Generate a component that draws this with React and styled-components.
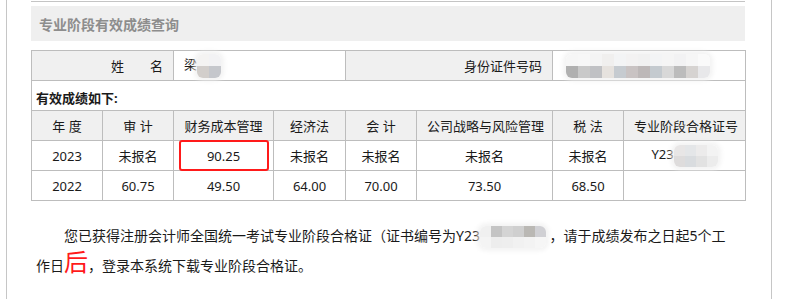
import React from 'react';
import styled, { createGlobalStyle } from 'styled-components';

const GlobalStyle = createGlobalStyle`
  body {
    margin: 0;
    background: #fff;
    font-family: "Noto Sans", "Noto Sans CJK SC", sans-serif;
    color: #1a1a1a;
  }
`;

const Frame = styled.div`
  box-sizing: border-box;
  margin-left: 6px;
  width: 766px;
  min-height: 299px;
  border-left: 1px solid #c6c6c6;
  border-right: 1px solid #c6c6c6;
  padding: 1px 26px 0 24px;
`;

const Inner = styled.div`
  border-top: 1px solid #c4c4c4;
`;

const Heading = styled.div`
  margin-top: 4px;
  height: 35px;
  background: #efefef;
  display: flex;
  align-items: center;
  padding-left: 8px;
  font-size: 14px;
  font-weight: bold;
  color: #8d8d8d;
`;

const Table = styled.table`
  margin-top: 9px;
  width: 714px;
  border-collapse: collapse;
  table-layout: fixed;
  font-size: 13px;
`;

const Row = styled.tr`
  height: 30px;
`;

const Cell = styled.td`
  border: 1px solid #bdbdbd;
  padding: 0 ${(p) => (p.$align === 'center' ? '0' : '10px')};
  text-align: ${(p) => p.$align || 'center'};
  background: ${(p) => (p.$shade ? '#f0f0f0' : '#fff')};
  line-height: 18px;
  white-space: nowrap;
  position: relative;
`;

const NoteCell = styled.td`
  border: 1px solid #bdbdbd;
  padding: 4px 0 0 4px;
  font-weight: bold;
  font-size: 13px;
`;

const Highlight = styled.div`
  position: absolute;
  left: 5px;
  right: 4px;
  top: -1px;
  bottom: -1px;
  border: 2px solid #ff1a1a;
  border-radius: 3px;
  pointer-events: none;
`;

const Mask = styled.span`
  display: inline-grid;
  grid-template-columns: repeat(${(p) => p.$cols}, ${(p) => p.$size}px);
  grid-auto-rows: ${(p) => p.$size}px;
  vertical-align: middle;
  margin-left: ${(p) => p.$gap || 0}px;
  border-radius: 6px;
  overflow: hidden;
  box-shadow: 0 0 4px 3px rgba(240, 240, 240, 0.8);
`;

const Tile = styled.span`
  background: ${(p) => p.$c};
`;

const Paragraph = styled.p`
  margin: 21px 0 0;
  padding: 0 8px 0 5px;
  font-size: 14px;
  line-height: 28px;
  text-indent: 2em;
`;

const Big = styled.span`
  color: #ff1a1a;
  font-size: 24px;
  line-height: 1;
`;

function Blur({ cols, size, gap, colors }) {
  return (
    <Mask $cols={cols} $size={size} $gap={gap}>
      {colors.map((c, i) => (
        <Tile key={i} $c={c} />
      ))}
    </Mask>
  );
}

const nameTiles = ['#f4f3f2', '#f2f2f4', '#d2cecb', '#c5c7cc'];
const idTiles = [
  '#f6f6f6', '#f7f7f7', '#f4f4f4', '#f0efee', '#f3f4f5', '#f3f2f2', '#f1f1f1', '#f3f4f5', '#f5f5f5', '#f2f2f3', '#f6f6f6', '#fafafa',
  '#b0b0b0', '#c9c9c9', '#c0c1c4', '#e6e2de', '#c6cbd0', '#c9c3c3', '#bdb8b8', '#c4cacf', '#d8d8d8', '#bcbcbc', '#d6d3d1', '#e8e8ea',
];
const certTiles = ['#e8e6e6', '#e4e6e8', '#ecebeb', '#f3f3f3', '#dedcdc', '#d9dcdf', '#e2e2e2', '#ececec'];
const paraTiles = [
  '#f0f0f0', '#c4c4c4', '#d4d4d4', '#cfcfcf', '#bab8b4', '#d0d0d4',
  '#f4f4f4', '#ededed', '#eeeeee', '#f1f1f1', '#f3f3f3', '#f6f6f6',
];

const subjects = ['年 度', '审 计', '财务成本管理', '经济法', '会 计', '公司战略与风险管理', '税 法', '专业阶段合格证号'];
const widths = [71, 71, 100, 72, 71, 136, 71, 122];

export default function App() {
  return (
    <>
      <GlobalStyle />
      <Frame>
        <Inner>
          <Heading>专业阶段有效成绩查询</Heading>
          <Table>
            <colgroup>
              {widths.map((w, i) => (
                <col key={i} style={{ width: w }} />
              ))}
            </colgroup>
            <tbody>
              <Row>
                <Cell colSpan={2} $align="right" $shade>姓　　名</Cell>
                <Cell colSpan={2} $align="left">
                  梁<Blur cols={2} size={12} colors={nameTiles} />
                </Cell>
                <Cell colSpan={2} $align="right" $shade>身份证件号码</Cell>
                <Cell colSpan={2} $align="left">
                  <Blur cols={12} size={12} gap={3} colors={idTiles} />
                </Cell>
              </Row>
              <Row>
                <NoteCell colSpan={8}>有效成绩如下:</NoteCell>
              </Row>
              <Row>
                {subjects.map((s) => (
                  <Cell key={s} $shade>{s}</Cell>
                ))}
              </Row>
              <Row>
                <Cell>2023</Cell>
                <Cell>未报名</Cell>
                <Cell>
                  90.25
                  <Highlight />
                </Cell>
                <Cell>未报名</Cell>
                <Cell>未报名</Cell>
                <Cell>未报名</Cell>
                <Cell>未报名</Cell>
                <Cell>
                  Y23<Blur cols={4} size={11} colors={certTiles} />
                </Cell>
              </Row>
              <Row>
                <Cell>2022</Cell>
                <Cell>60.75</Cell>
                <Cell>49.50</Cell>
                <Cell>64.00</Cell>
                <Cell>70.00</Cell>
                <Cell>73.50</Cell>
                <Cell>68.50</Cell>
                <Cell />
              </Row>
            </tbody>
          </Table>
          <Paragraph>
            您已获得注册会计师全国统一考试专业阶段合格证（证书编号为Y23
            <Blur cols={6} size={11} colors={paraTiles} />
            &nbsp;，请于成绩发布之日起5个工作日<Big>后</Big>，登录本系统下载专业阶段合格证。
          </Paragraph>
        </Inner>
      </Frame>
    </>
  );
}
